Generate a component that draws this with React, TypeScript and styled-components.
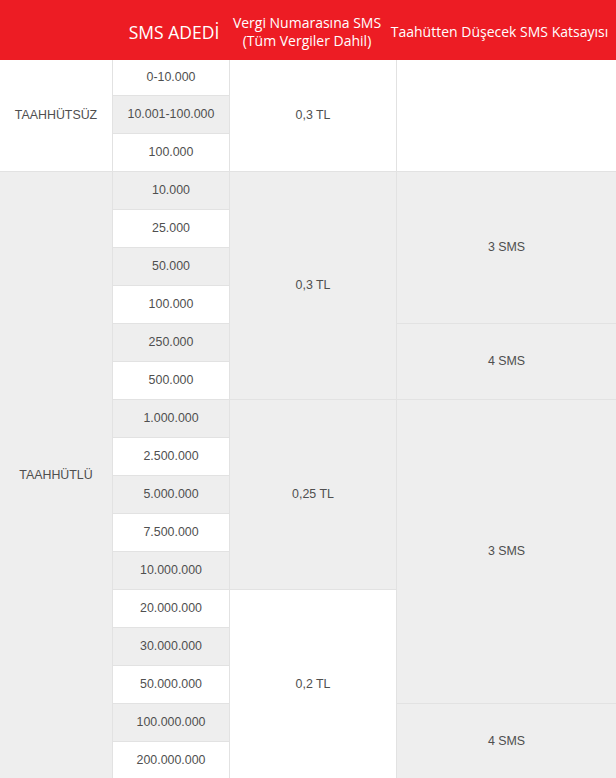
import { createGlobalStyle, styled } from "styled-components";

const GlobalStyle = createGlobalStyle`
    html, body {
        margin: 0;
        padding: 0;
        background: #ffffff;
    }
    body {
        font-family: "Liberation Sans", Arial, sans-serif;
    }
`;

const COLUMNS = "112px 116px 166px 1fr";

const Wrapper = styled.div`
    width: 616px;
`;

const Header = styled.div`
    display: grid;
    grid-template-columns: ${COLUMNS};
    column-gap: 1px;
    height: 60px;
    background: #ed1c24;
`;

const HeadCell = styled.div<{ $size: number; $shift?: number }>`
    display: flex;
    align-items: center;
    justify-content: center;
    text-align: center;
    color: #ffffff;
    font-family: "Open Sans", "Noto Sans", sans-serif;
    font-size: ${({ $size }) => $size}px;
    line-height: 18px;
    padding-top: 4px;
    transform: translateX(${({ $shift = 0 }) => $shift}px);
    white-space: nowrap;
`;

const Body = styled.div`
    display: grid;
    grid-template-columns: ${COLUMNS};
    grid-template-rows: 35px repeat(18, 37px);
    gap: 1px;
    background: #e2e2e2;
`;

const Cell = styled.div<{ $col: number; $row: number; $span?: number; $shade?: boolean }>`
    grid-column: ${({ $col }) => $col};
    grid-row: ${({ $row, $span = 1 }) => `${$row} / span ${$span}`};
    display: flex;
    align-items: center;
    justify-content: center;
    padding-bottom: 2px;
    background: ${({ $shade }) => ($shade ? "#eeeeee" : "#ffffff")};
    color: #4f4f4f;
    font-size: 12.4px;
`;

const amounts = [
    "0-10.000",
    "10.001-100.000",
    "100.000",
    "10.000",
    "25.000",
    "50.000",
    "100.000",
    "250.000",
    "500.000",
    "1.000.000",
    "2.500.000",
    "5.000.000",
    "7.500.000",
    "10.000.000",
    "20.000.000",
    "30.000.000",
    "50.000.000",
    "100.000.000",
    "200.000.000",
];

// price column: [row, span, text, shaded]
const prices: [number, number, string, boolean][] = [
    [1, 3, "0,3 TL", false],
    [4, 6, "0,3 TL", true],
    [10, 5, "0,25 TL", true],
    [15, 5, "0,2 TL", false],
];

// sms coefficient column
const rates: [number, number, string, boolean][] = [
    [1, 3, "", false],
    [4, 4, "3 SMS", true],
    [8, 2, "4 SMS", true],
    [10, 8, "3 SMS", true],
    [18, 2, "4 SMS", true],
];

function isShaded(index: number) {
    // first group starts white, second group starts gray
    if (index < 3) return index % 2 === 1;
    return (index - 3) % 2 === 0;
}

export default function App() {
    return (
        <Wrapper>
            <GlobalStyle />
            <Header>
                <HeadCell $size={16} />
                <HeadCell $size={17.5} $shift={3}>SMS ADEDİ</HeadCell>
                <HeadCell $size={14} $shift={-6}>
                    Vergi Numarasına SMS
                    <br />
                    (Tüm Vergiler Dahil)
                </HeadCell>
                <HeadCell $size={14} $shift={-7}>Taahütten Düşecek SMS Katsayısı</HeadCell>
            </Header>
            <Body>
                <Cell $col={1} $row={1} $span={3}>TAAHHÜTSÜZ</Cell>
                <Cell $col={1} $row={4} $span={16} $shade>TAAHHÜTLÜ</Cell>
                {amounts.map((a, i) => (
                    <Cell key={i} $col={2} $row={i + 1} $shade={isShaded(i)}>
                        {a}
                    </Cell>
                ))}
                {prices.map(([row, span, text, shade]) => (
                    <Cell key={"p" + row} $col={3} $row={row} $span={span} $shade={shade}>
                        {text}
                    </Cell>
                ))}
                {rates.map(([row, span, text, shade]) => (
                    <Cell key={"r" + row} $col={4} $row={row} $span={span} $shade={shade}>
                        {text}
                    </Cell>
                ))}
            </Body>
        </Wrapper>
    );
}
